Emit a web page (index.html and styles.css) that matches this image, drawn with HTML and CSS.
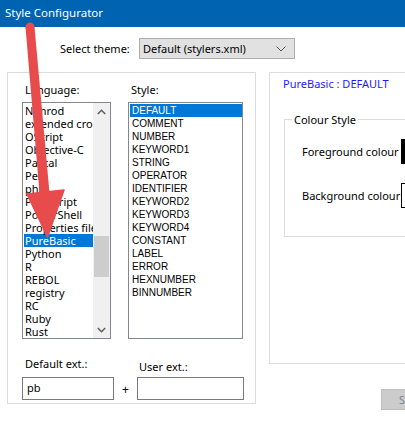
FILE: index.html
```html
<!DOCTYPE html>
<html>
<head>
<meta charset="utf-8">
<link rel="stylesheet" href="styles.css">
</head>
<body>
<div class="window">
  <div class="titlebar">Style Configurator</div>
  <div class="theme-row">
    <span class="theme-label">Select theme:</span>
    <div class="combo">
      <span class="combo-text">Default (stylers.xml)</span>
      <svg class="combo-chev" width="10" height="6" viewBox="0 0 10 6"><path d="M0.5 0.5 L5 5 L9.5 0.5" fill="none" stroke="#555" stroke-width="1"/></svg>
    </div>
  </div>
  <div class="main">
    <div class="left-group">
      <div class="lists">
        <div class="col">
          <div class="lbl">Language:</div>
          <div class="listbox lang">
            <div class="items">
              <div class="row">Nimrod</div>
              <div class="row">extended crontab</div>
              <div class="row">OScript</div>
              <div class="row">Objective-C</div>
              <div class="row">Pascal</div>
              <div class="row">Perl</div>
              <div class="row">php</div>
              <div class="row">PostScript</div>
              <div class="row">PowerShell</div>
              <div class="row">Properties file</div>
              <div class="row sel">PureBasic</div>
              <div class="row">Python</div>
              <div class="row">R</div>
              <div class="row">REBOL</div>
              <div class="row">registry</div>
              <div class="row">RC</div>
              <div class="row">Ruby</div>
              <div class="row">Rust</div>
            </div>
            <div class="scrollbar">
              <div class="sb-btn"><svg width="9" height="6" viewBox="0 0 9 6"><path d="M0.8 5 L4.5 1.3 L8.2 5" fill="none" stroke="#606060" stroke-width="1.6"/></svg></div>
              <div class="sb-track"><div class="sb-thumb"></div></div>
              <div class="sb-btn"><svg width="9" height="6" viewBox="0 0 9 6"><path d="M0.8 1 L4.5 4.7 L8.2 1" fill="none" stroke="#606060" stroke-width="1.6"/></svg></div>
            </div>
          </div>
        </div>
        <div class="col style-col">
          <div class="lbl">Style:</div>
          <div class="listbox style">
            <div class="items">
              <div class="row sel">DEFAULT</div>
              <div class="row">COMMENT</div>
              <div class="row">NUMBER</div>
              <div class="row">KEYWORD1</div>
              <div class="row">STRING</div>
              <div class="row">OPERATOR</div>
              <div class="row">IDENTIFIER</div>
              <div class="row">KEYWORD2</div>
              <div class="row">KEYWORD3</div>
              <div class="row">KEYWORD4</div>
              <div class="row">CONSTANT</div>
              <div class="row">LABEL</div>
              <div class="row">ERROR</div>
              <div class="row">HEXNUMBER</div>
              <div class="row">BINNUMBER</div>
            </div>
          </div>
        </div>
      </div>
      <div class="ext-row">
        <div class="ext-col">
          <div class="lbl">Default ext.:</div>
          <div class="input def">pb</div>
        </div>
        <div class="plus">+</div>
        <div class="ext-col user">
          <div class="lbl">User ext.:</div>
          <div class="input usr"></div>
        </div>
      </div>
    </div>
    <div class="right-col">
      <div class="right-panel">
        <div class="panel-title">PureBasic : DEFAULT</div>
        <fieldset class="colour-group">
          <legend>Colour Style</legend>
          <div class="crow">
            <span class="clabel">Foreground colour</span>
            <div class="swatch fg"></div>
          </div>
          <div class="crow">
            <span class="clabel">Background colour</span>
            <div class="swatch bg"></div>
          </div>
        </fieldset>
      </div>
      <div class="btn-row"><div class="btn">Save</div></div>
    </div>
  </div>
  <svg class="arrow" width="405" height="423" viewBox="0 0 405 423">
    <path d="M25.5 27 L34.5 27 L49.5 193 L39.5 193 Z" fill="#E84B4B"/>
    <circle cx="30" cy="27" r="4.5" fill="#E84B4B"/>
    <path d="M27 194 L64 190 L47.5 237 Z" fill="#E84B4B" stroke="#E84B4B" stroke-width="1.5" stroke-linejoin="round"/>
  </svg>
</div>
</body>
</html>
```

FILE: styles.css
```css
html, body {
  margin: 0;
  padding: 0;
}
body {
  width: 405px;
  height: 423px;
  overflow: hidden;
  background: #ffffff;
  font-family: "Noto Sans", "Open Sans", sans-serif;
  font-size: 11px;
  color: #000;
}
.window {
  position: relative;
  width: 405px;
  height: 423px;
  overflow: hidden;
  background: #ffffff;
}
.titlebar {
  height: 27px;
  line-height: 26px;
  background: #0063B1;
  color: #ffffff;
  padding-left: 5px;
  font-size: 11.5px;
}
.theme-row {
  display: flex;
  align-items: center;
  margin-top: 11px;
  padding-left: 60px;
  height: 21px;
}
.theme-label {
  width: 79px;
  line-height: 21px;
}
.combo {
  box-sizing: border-box;
  width: 156px;
  height: 21px;
  background: #E1E1E1;
  border: 1px solid #ADADAD;
  display: flex;
  align-items: center;
  justify-content: space-between;
  padding: 0 8px 0 3px;
}
.combo-text {
  line-height: 19px;
}
.main {
  display: flex;
  margin-top: 13px;
  align-items: flex-start;
}
.left-group {
  flex: none;
  box-sizing: border-box;
  margin-left: 7px;
  width: 249px;
  height: 332px;
  border: 1px solid #DCDCDC;
  padding: 10px 0 0 14px;
}
.lists {
  display: flex;
}
.col {
  display: flex;
  flex-direction: column;
}
.style-col {
  margin-left: 17px;
}
.lbl {
  height: 13px;
  line-height: 13px;
  padding-left: 3px;
  margin-bottom: 6px;
}
.listbox {
  box-sizing: border-box;
  height: 237px;
  border: 1px solid #828790;
  background: #fff;
  display: flex;
  overflow: hidden;
}
.listbox.lang {
  width: 89px;
}
.listbox.style {
  width: 115px;
}
.items {
  flex: 1;
  padding: 1px 0 0 1px;
  overflow: hidden;
  min-width: 0;
}
.row {
  height: 13px;
  line-height: 13px;
  white-space: nowrap;
  padding-left: 1px;
}
.style .items {
  padding-left: 1px;
}
.style .row {
  font-family: "Liberation Sans", Arial, sans-serif;
  font-size: 10px;
  padding-left: 2px;
  color: #000;
}
.row.sel {
  background: #0078D7;
  color: #fff !important;
}
.scrollbar {
  flex: none;
  width: 17px;
  background: #F0F0F0;
  display: flex;
  flex-direction: column;
}
.sb-btn {
  height: 17px;
  display: flex;
  align-items: center;
  justify-content: center;
}
.sb-track {
  flex: 1;
  padding: 0 1px;
}
.sb-thumb {
  margin-top: 116px;
  height: 41px;
  background: #CDCDCD;
}
.ext-row {
  display: flex;
  align-items: flex-start;
  margin-top: 18px;
}
.ext-col {
  display: flex;
  flex-direction: column;
}
.ext-col .lbl {
  margin-bottom: 7px;
}
.ext-col.user .lbl {
  padding-top: 2px;
  height: 11px;
  line-height: 15px;
  padding-left: 2px;
}
.input {
  box-sizing: border-box;
  height: 23px;
  border: 1px solid #7A7A7A;
  line-height: 20px;
  padding-left: 4px;
  background: #fff;
}
.input.def {
  width: 92px;
}
.input.usr {
  width: 107px;
}
.plus {
  width: 23px;
  text-align: center;
  margin-top: 24px;
  font-size: 12px;
}
.right-col {
  flex: none;
  margin-left: 13px;
  display: flex;
  flex-direction: column;
}
.right-panel {
  box-sizing: border-box;
  width: 220px;
  height: 292px;
  border: 1px solid #DCDCDC;
  padding: 4px 0 0 13px;
}
.panel-title {
  color: #1A1AFF;
  height: 13px;
  line-height: 13px;
  font-size: 11px;
}
.colour-group {
  margin: 23px 0 0 1px;
  width: 200px;
  box-sizing: border-box;
  height: 124px;
  border: 1px solid #DCDCDC;
  padding: 13px 0 0 17px;
}
.colour-group legend {
  padding: 0 2px;
  margin-left: -10px;
  line-height: 13px;
  height: 13px;
}
.crow {
  display: flex;
  align-items: center;
  height: 25px;
  margin-bottom: 19px;
}
.clabel {
  width: 99px;
  flex: none;
}
.swatch {
  flex: none;
  box-sizing: border-box;
  width: 40px;
  height: 25px;
  border: 1px solid #000;
}
.swatch.fg {
  background: #000;
}
.swatch.bg {
  background: #fff;
}
.btn-row {
  display: flex;
  margin-top: 25px;
  padding-left: 112px;
}
.btn {
  flex: none;
  box-sizing: border-box;
  width: 75px;
  height: 21px;
  background: #CCCCCC;
  border: 1px solid #BFBFBF;
  color: #838383;
  line-height: 19px;
  padding-left: 17px;
}
.arrow {
  position: absolute;
  left: 0;
  top: 0;
  pointer-events: none;
}
```
